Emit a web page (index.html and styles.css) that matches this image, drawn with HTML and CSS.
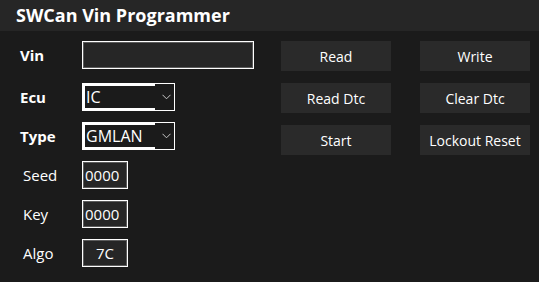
FILE: index.html
```html
<!DOCTYPE html>
<html lang="en">
<head>
  <meta charset="UTF-8">
  <meta name="viewport" content="width=device-width, initial-scale=1">
  <title>SWCan Vin Programmer</title>
  <link rel="stylesheet" href="styles.css">
</head>
<body>
  <div class="title-bar">SWCan Vin Programmer</div>
  <div class="main">
    <div class="form">
      <div class="row row-first">
        <label class="label bold">Vin</label>
        <div class="text-box vin"></div>
      </div>
      <div class="row">
        <label class="label bold">Ecu</label>
        <div class="combo">
          <span class="combo-text">IC</span>
          <svg class="chevron" width="9" height="6" viewBox="0 0 9 6"><polyline points="0.5,0.8 4.5,4.8 8.5,0.8" fill="none" stroke="#c8c8c8" stroke-width="1"/></svg>
        </div>
      </div>
      <div class="row">
        <label class="label bold">Type</label>
        <div class="combo">
          <span class="combo-text">GMLAN</span>
          <svg class="chevron" width="9" height="6" viewBox="0 0 9 6"><polyline points="0.5,0.8 4.5,4.8 8.5,0.8" fill="none" stroke="#c8c8c8" stroke-width="1"/></svg>
        </div>
      </div>
      <div class="row">
        <label class="label">Seed</label>
        <div class="text-box small">0000</div>
      </div>
      <div class="row">
        <label class="label">Key</label>
        <div class="text-box small">0000</div>
      </div>
      <div class="row">
        <label class="label">Algo</label>
        <div class="text-box small center">7C</div>
      </div>
    </div>
    <div class="buttons">
      <button class="btn">Read</button>
      <button class="btn">Write</button>
      <button class="btn">Read Dtc</button>
      <button class="btn">Clear Dtc</button>
      <button class="btn">Start</button>
      <button class="btn">Lockout Reset</button>
    </div>
  </div>
</body>
</html>
```
FILE: styles.css
```css
body {
  margin: 0;
  width: 539px;
  height: 282px;
  background-color: #1b1b1b;
  color: #ffffff;
  font-family: 'Open Sans', 'Noto Sans', sans-serif;
  overflow: hidden;
}

.title-bar {
  height: 31px;
  background-color: #262626;
  padding-left: 16px;
  font-size: 18px;
  font-weight: bold;
  line-height: 31px;
  box-sizing: border-box;
}

.main {
  display: flex;
  align-items: flex-start;
  padding-top: 10px;
  padding-left: 20px;
}

.form {
  display: flex;
  flex-direction: column;
  gap: 11px;
}

.row {
  display: flex;
  align-items: center;
  height: 28px;
}

.row-first {
  margin-bottom: 3px;
}

.label {
  width: 62px;
  padding-left: 3px;
  box-sizing: border-box;
  font-size: 15px;
}

.label.bold {
  padding-left: 0;
  font-weight: bold;
  font-size: 15px;
}

.text-box {
  height: 28px;
  box-sizing: border-box;
  border: 1px solid #ffffff;
  box-shadow: 0 0 0 1px #5c5c5c inset;
  background-color: #262626;
  font-size: 15px;
  line-height: 26px;
  padding-left: 3px;
}

.vin {
  width: 172px;
}

.small {
  width: 46px;
  padding-left: 2px;
}

.center {
  text-align: center;
  padding-left: 0;
}

.combo {
  width: 93px;
  height: 28px;
  box-sizing: border-box;
  border: 1px solid #ffffff;
  background-color: #1b1b1b;
  display: flex;
  align-items: center;
}

.combo-text {
  width: 72px;
  height: 26px;
  box-sizing: border-box;
  border-style: solid;
  border-color: #ffffff;
  border-width: 2px 0 2px 2px;
  background-color: #1b1b1b;
  font-size: 16px;
  line-height: 22px;
  padding-left: 1px;
}

.chevron {
  margin-left: 7px;
}

.buttons {
  display: grid;
  grid-template-columns: 110px 110px;
  grid-auto-rows: 30px;
  column-gap: 29px;
  row-gap: 12px;
  margin-left: 27px;
}

.btn {
  background-color: #2a2a2a;
  border: none;
  color: #ffffff;
  font-family: 'Open Sans', 'Noto Sans', sans-serif;
  font-size: 14px;
  padding: 0;
}
```
